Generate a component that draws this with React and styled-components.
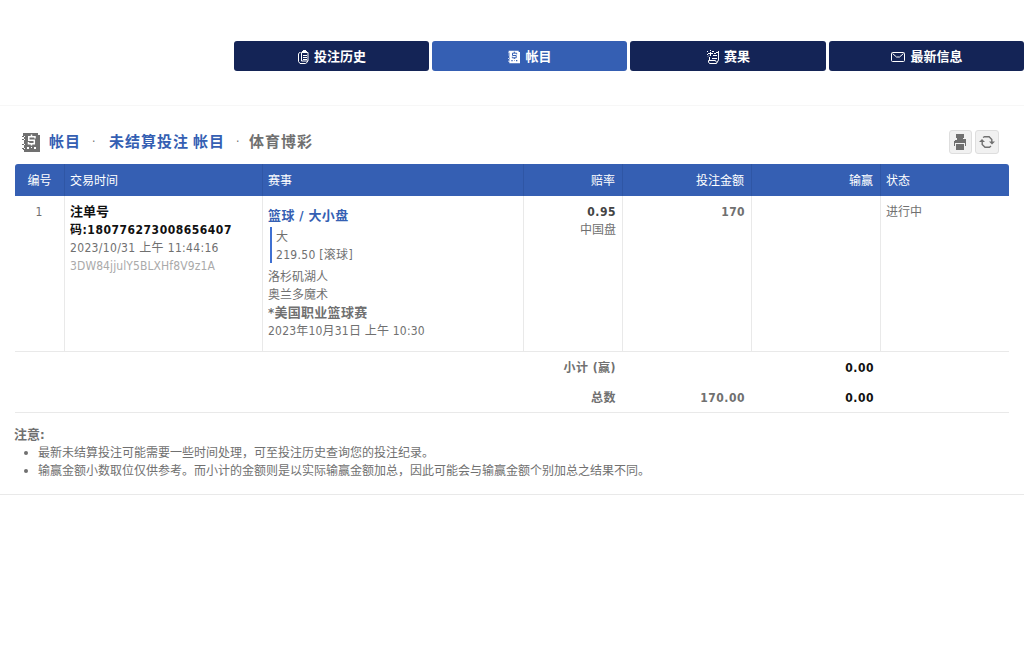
import React from 'react';
import styled, { createGlobalStyle } from 'styled-components';

const GlobalStyle = createGlobalStyle`
  * { box-sizing: border-box; }
  body {
    margin: 0;
    background: #fff;
    color: #707070;
    font: 12px/18px "DejaVu Sans Condensed", "DejaVu Sans", "Noto Sans CJK SC", sans-serif;
    font-stretch: condensed;
  }
`;

const Nav = styled.nav`
  display: grid;
  grid-template-columns: 195px 195px 196px 195px;
  column-gap: 3px;
  justify-content: end;
  height: 106px;
  padding-top: 41px;
  border-bottom: 1px solid #f7f7f7;
`;

const Tab = styled.a`
  display: flex;
  align-items: center;
  justify-content: center;
  gap: 5px;
  height: 30px;
  padding: 2px 0 0 1px;
  border-radius: 3px;
  background: ${(p) => (p.$active ? '#355fb3' : '#142456')};
  color: #fff;
  font-size: 13px;
  font-weight: bold;
`;

const Content = styled.main`
  padding: 24px 15px 0;
`;

const TitleBar = styled.header`
  display: flex;
  align-items: flex-start;
  height: 34px;
  padding: 0 10px 0 7px;
`;

const Title = styled.h1`
  display: flex;
  align-items: center;
  flex: 1;
  height: 24px;
  margin: 0;
  font-size: 15px;
  font-weight: bold;
  letter-spacing: 1px;
  white-space: pre;
`;

const TitleLink = styled.span`
  color: #355fb3;
  margin-left: ${(p) => p.$gap || 0}px;
`;

const Dot = styled.span`
  width: 4px;
  margin: 0 ${(p) => p.$right}px 0 11px;
  font-size: 12px;
  font-weight: normal;
`;

const ToolButton = styled.button`
  display: flex;
  align-items: center;
  justify-content: center;
  width: ${(p) => p.$width}px;
  height: 24px;
  margin-left: 3px;
  padding: 0 1px 0 0;
  border: 1px solid #dedede;
  border-radius: 3px;
  background: #f1f1f1;
  color: #707070;
`;

const Row = styled.div`
  display: grid;
  grid-template-columns: 50px 198px 261px 99px 129px 129px 128px;
`;

const HeadRow = styled(Row)`
  height: 32px;
  border-radius: 3px 3px 0 0;
  background: #355fb3;
  color: #fff;
`;

const HeadCell = styled.div`
  padding: 8px 7px 0 5px;
  padding-left: ${(p) => (p.$align === 'center' ? 7 : 5)}px;
  border-right: 1px solid ${(p) => (p.$last ? 'transparent' : '#2f56a5')};
  text-align: ${(p) => p.$align || 'left'};
`;

const BetRow = styled(Row)`
  height: 156px;
  border-bottom: 1px solid #e9e9e9;
`;

const Cell = styled.div`
  padding: 7px 6px 0 5px;
  border-right: 1px solid ${(p) => (p.$last ? 'transparent' : '#e9e9e9')};
  text-align: ${(p) => p.$align || 'left'};
`;

const Line = styled.div`
  height: 18px;
  white-space: nowrap;
`;

const Num = styled.span`
  letter-spacing: ${(p) => p.$spacing ?? 0.3}px;
`;

const Strong = styled.b`
  color: ${(p) => p.$color || 'inherit'};
  font-size: ${(p) => p.$size || 12}px;
  letter-spacing: ${(p) => p.$spacing ?? 0}px;
`;

const Game = styled(Line)`
  margin-top: 4px;
  height: 20px;
`;

const Pick = styled.div`
  height: 36px;
  margin: 0 0 5px 2px;
  padding: 1px 0 0 4px;
  border-left: 2px solid #3f70d2;
`;

const Code = styled(Line)`
  color: #aaa;
  letter-spacing: 0.1px;
`;

const Totals = styled.div`
  height: 61px;
  border-bottom: 1px solid #e9e9e9;
`;

const TotalRow = styled(Row)`
  height: 30px;
  font-weight: bold;
  text-align: right;
`;

const TotalCell = styled.div`
  grid-column: ${(p) => p.$col};
  padding: 7px 7px 0 0;
  color: ${(p) => (p.$dark ? '#111' : 'inherit')};
  letter-spacing: 0.5px;
  white-space: nowrap;
`;

const Notes = styled.footer`
  height: 82px;
  padding: 13px 15px 0 14px;
  border-bottom: 1px solid #e9e9e9;
`;

const NoteHeading = styled.div`
  height: 18px;
  font-size: 13px;
  font-weight: bold;
`;

const NoteList = styled.ul`
  margin: 0;
  padding: 0;
  list-style: none;
`;

const NoteItem = styled.li`
  display: flex;
  align-items: center;
  gap: 10px;
  height: 18px;
  padding-left: 10px;
  white-space: nowrap;
  &::before {
    content: '';
    width: 4px;
    height: 4px;
    border-radius: 2px;
    background: #707070;
  }
`;

function ClipboardIcon() {
  return (
    <svg width="11" height="14" viewBox="0 0 11 14" fill="none" stroke="currentColor">
      <path d="M2.500 2.500H1.500L.5 4v7.500L2 13.500h5.500l2-1.500v-1M3.500 11V2.500h6.500V11H3.500M5 5.500h4M5 7.500h4M5 9.500h4" />
      <path d="M4 1.500h5M5 .5h3" />
    </svg>
  );
}

function LedgerIcon({ width, height, color }) {
  return (
    <svg width={width} height={height} viewBox="0 0 18 19">
      <path fill="currentColor" d="M1 0h15v2h2v17H2v-2h-1v-1h-1v-1h2v-3H0v-1h2V7H0V6h2V4H0V3h1z" />
      <path fill="none" stroke={color} strokeWidth="1.5" d="M9.500 1.500v2M13 5.500V3.750H6.750v3.500H12.300v3.500H6.500V9M9.500 10.500v2" />
      <path fill={color} d="M5 14h2v2H5zM9 14h1v1H9zM12 14h2v2h-2zM2 3h1v1H2zM2 6h1v1H2zM2 11h1v1H2zM2 15h1v1H2z" />
    </svg>
  );
}

function ResultIcon() {
  return (
    <svg width="12" height="14" viewBox="0 0 12 14" fill="none" stroke="currentColor">
      <path d="M7 3.500h2M11.500 1v9l-2 3.500H2.500L1.500 12v-1.500h7l1 2M2.500 7v3M6 5.500h4M5 8.500h5M9 2.500h2" />
      <path d="M0 1.500h1M3.500 0v1M1 3.500h5M3.500 2v4M1 6.500l1-1M5 1.500h2M0 4.500h1" />
    </svg>
  );
}

function MailIcon() {
  return (
    <svg width="14" height="11" viewBox="0 0 14 11" fill="none" stroke="currentColor">
      <rect x=".5" y=".5" width="13" height="9" rx="1" />
      <path d="M1.500 1.500L5.500 5h3l4-3.500" />
    </svg>
  );
}

function PrintIcon() {
  return (
    <svg width="12" height="16" viewBox="0 0 12 16" fill="currentColor">
      <path d="M2 0h8v4H9v1h3v7h-1V9H1v3H0V7h1V6h2V4H2zM2 10h8v6H2z" />
    </svg>
  );
}

function RefreshIcon() {
  return (
    <svg width="16" height="12" viewBox="0 0 16 12" fill="none" stroke="currentColor" strokeWidth="1.4">
      <path d="M4 1.500L5.500.7h4.600L12.800 3.500V6M12 10l-1.500 1.300H6L3.200 8.500V5" />
      <path fill="currentColor" stroke="none" d="M10 5.500h6L13 8.500zM0 6h6L3 3z" />
    </svg>
  );
}

const columns = [
  ['编号', 'center'], ['交易时间'], ['赛事'], ['赔率', 'right'],
  ['投注金额', 'right'], ['输赢', 'right'], ['状态'],
];

export default function App() {
  return (
    <>
      <GlobalStyle />
      <Nav>
        <Tab><ClipboardIcon />投注历史</Tab>
        <Tab $active><LedgerIcon width={12} height={14} color="#355fb3" />帐目</Tab>
        <Tab><ResultIcon />赛果</Tab>
        <Tab><MailIcon />最新信息</Tab>
      </Nav>
      <Content>
        <TitleBar>
          <Title>
            <LedgerIcon width={18} height={19} color="#fff" />
            <TitleLink $gap={9}>帐目</TitleLink>
            <Dot $right={13}>·</Dot>
            <TitleLink>未结算投注</TitleLink>
            <TitleLink $gap={4}>帐目</TitleLink>
            <Dot $right={9}>·</Dot>
            体育博彩
          </Title>
          <ToolButton $width={23}><PrintIcon /></ToolButton>
          <ToolButton $width={24}><RefreshIcon /></ToolButton>
        </TitleBar>
        <HeadRow>
          {columns.map(([label, align], i) => (
            <HeadCell key={label} $align={align} $last={i === 6}>{label}</HeadCell>
          ))}
        </HeadRow>
        <BetRow>
          <Cell $align="center">1</Cell>
          <Cell>
            <Line><Strong $color="#111" $size={13}>注单号</Strong></Line>
            <Line><Strong $color="#111" $spacing={0.52}>码:180776273008656407</Strong></Line>
            <Line><Num $spacing={0.33}>2023/10/31 上午 11:44:16</Num></Line>
            <Code>3DW84jjulY5BLXHf8V9z1A</Code>
          </Cell>
          <Cell>
            <Game><Strong $color="#355fb3" $size={13} $spacing={0.4}>篮球 / 大小盘</Strong></Game>
            <Pick>
              <Line>大</Line>
              <Line><Num>219.50 [滚球]</Num></Line>
            </Pick>
            <Line>洛杉矶湖人</Line>
            <Line>奥兰多魔术</Line>
            <Line><Strong $size={13} $spacing={0.3}>*美国职业篮球赛</Strong></Line>
            <Line><Num $spacing={0.2}>2023年10月31日 上午 10:30</Num></Line>
          </Cell>
          <Cell $align="right">
            <Line><Strong $color="#444" $spacing={0.5}>0.95</Strong></Line>
            <Line>中国盘</Line>
          </Cell>
          <Cell $align="right"><Strong $spacing={0.4}>170</Strong></Cell>
          <Cell />
          <Cell $last>进行中</Cell>
        </BetRow>
        <Totals>
          <TotalRow>
            <TotalCell $col={4}>小计 (赢)</TotalCell>
            <TotalCell $col={6} $dark>0.00</TotalCell>
          </TotalRow>
          <TotalRow>
            <TotalCell $col={4}>总数</TotalCell>
            <TotalCell $col={5}>170.00</TotalCell>
            <TotalCell $col={6} $dark>0.00</TotalCell>
          </TotalRow>
        </Totals>
      </Content>
      <Notes>
        <NoteHeading>注意:</NoteHeading>
        <NoteList>
          <NoteItem>最新未结算投注可能需要一些时间处理，可至投注历史查询您的投注纪录。</NoteItem>
          <NoteItem>输赢金额小数取位仅供参考。而小计的金额则是以实际输赢金额加总，因此可能会与输赢金额个别加总之结果不同。</NoteItem>
        </NoteList>
      </Notes>
    </>
  );
}
